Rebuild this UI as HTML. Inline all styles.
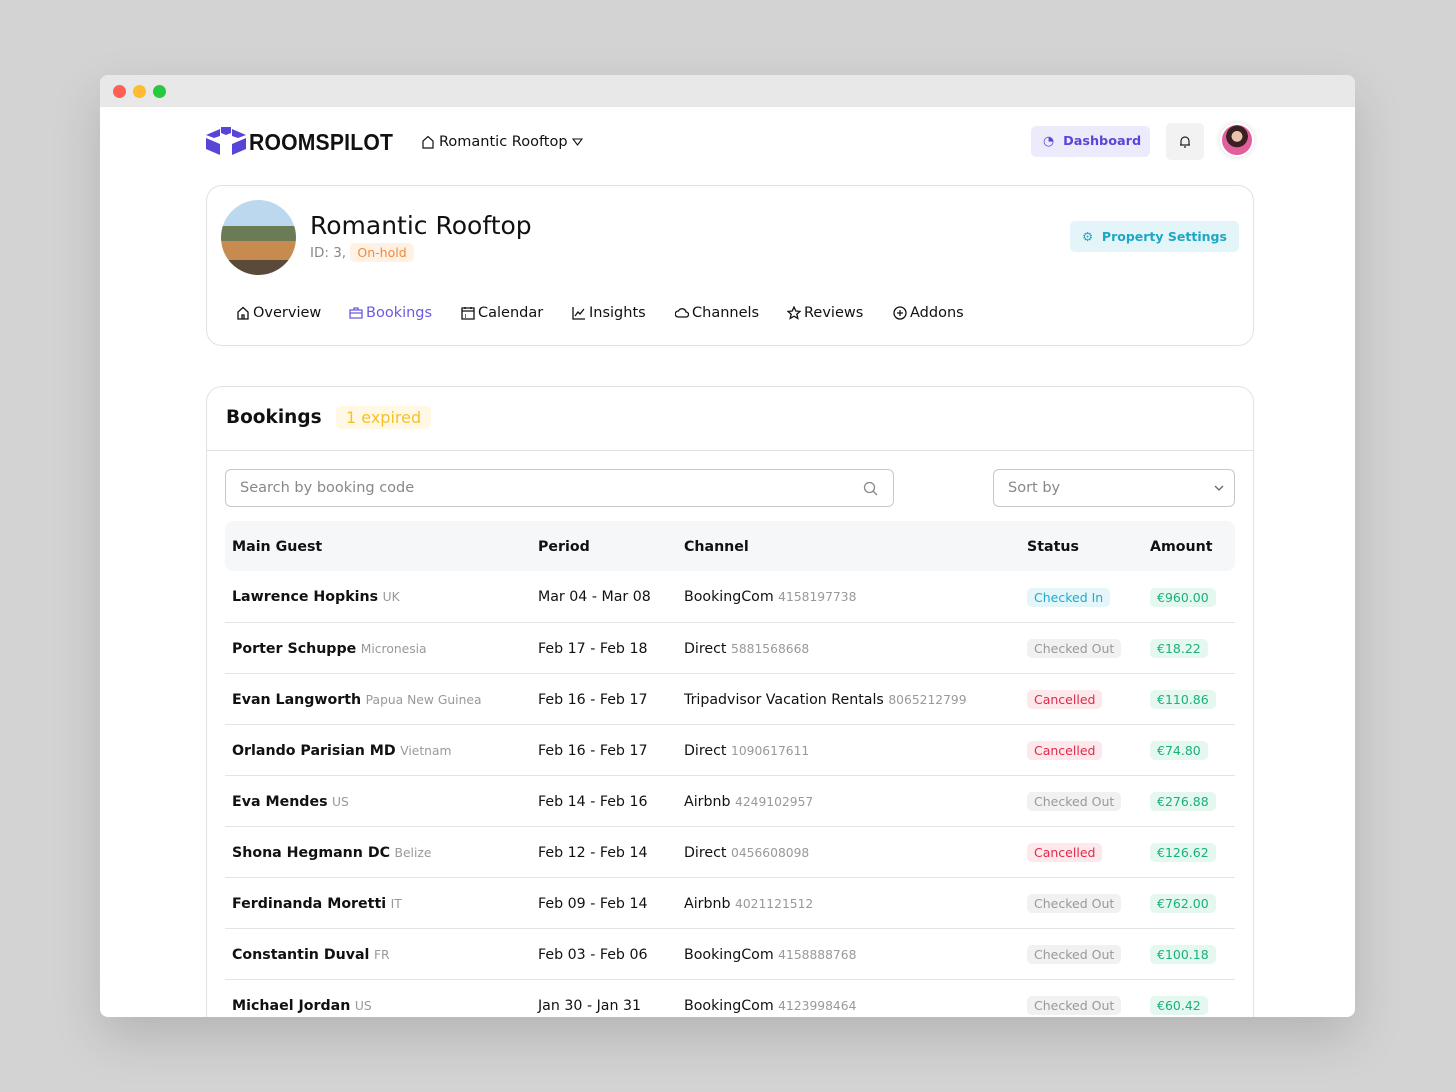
<!DOCTYPE html>
<html><head><meta charset="utf-8"><style>
*{box-sizing:border-box;margin:0;padding:0}
body{width:1455px;height:1092px;background:#d3d3d3;font-family:"DejaVu Sans","Liberation Sans",sans-serif;color:#111;position:relative;overflow:hidden}
.win{position:absolute;left:100px;top:75px;width:1255px;height:942px;background:#fff;border-radius:8px;overflow:hidden;box-shadow:0 20px 50px rgba(0,0,0,.15)}
.bar{height:32px;background:#e8e8e8;position:relative}
.dot{position:absolute;top:10px;width:13px;height:13px;border-radius:50%}
.abs{position:absolute}
.card{position:absolute;left:106px;width:1048px;border:1px solid #e2e2e2;border-radius:16px;background:#fff}
.tabs span{position:absolute;top:0;font-size:14.5px;display:flex;align-items:center;gap:3px}
.tabs svg{width:14px;height:14px;fill:none;stroke:currentColor;stroke-width:1.3}
.badge{display:inline-block;padding:2px 7px;border-radius:5px;font-size:12.5px}
table{border-collapse:collapse;width:1010px;position:absolute;left:125px;top:446px;font-size:14.2px}
th{height:50px;text-align:left;font-weight:bold;background:#f6f7f9;padding-left:7px;padding-top:2px}
td{height:51px;border-bottom:1px solid #e4e4e4;padding-left:7px;white-space:nowrap;padding-top:2px}
td b{font-weight:bold}
.g{color:#999;font-size:12.3px}
.ci{background:#e4f6fa;color:#22aac6}.co{background:#f1f1f1;color:#999}.ca{background:#fde8ec;color:#e02a4a}.am{background:#e5f8f0;color:#1ab07a}
</style></head><body>
<div class="win">
<div class="bar"><div class="dot" style="left:13px;background:#fe5f57"></div><div class="dot" style="left:33px;background:#febc2e"></div><div class="dot" style="left:53px;background:#28c840"></div></div>
<svg class="abs" style="left:106px;top:52px" width="40" height="29" viewBox="0 0 40 29"><path d="M0 8 L14 2 L14 9 L8 11 Z M26 2 L40 8 L32 11 L26 9 Z M0 11 L14 17 L14 28 L0 22 Z M26 17 L40 11 L40 22 L26 28 Z M15 0 L25 0 L25 6 L20 8 L15 6Z" fill="#5745d8"/></svg>
<div class="abs" style="left:149px;top:54px;font-family:'Liberation Sans',sans-serif;font-weight:bold;font-size:23px;letter-spacing:0.2px;transform:scaleX(.92);transform-origin:left">ROOMSPILOT</div>
<div class="abs" style="left:321px;top:59px;font-size:14.5px;display:flex;align-items:center;gap:4px"><svg width="14" height="14" viewBox="0 0 14 14" fill="none" stroke="#111" stroke-width="1.2"><path d="M2 13V6L7 1.5 12 6V13H2Z"/></svg>Romantic Rooftop<svg width="11" height="8" viewBox="0 0 11 8" fill="none" stroke="#111" stroke-width="1.1"><path d="M1 1H10L5.5 7Z"/></svg></div>
<div class="abs" style="left:931px;top:51px;width:119px;height:31px;background:#ecebfb;border-radius:5px;color:#5a45d8;font-weight:bold;font-size:12.8px;padding:8px 0 0 12px">◔ &nbsp;Dashboard</div>
<div class="abs" style="left:1066px;top:48px;width:38px;height:37px;background:#f2f2f2;border-radius:5px;display:flex;align-items:center;justify-content:center"><svg width="12" height="13" viewBox="0 0 12 13" fill="none" stroke="#222" stroke-width="1.2"><path d="M2 10V6a4 4 0 0 1 8 0v4H2ZM1 10h10M5 12h2"/></svg></div>
<div class="abs" style="left:1120px;top:48px;width:34px;height:34px;border-radius:50%;background:radial-gradient(circle at 50% 38%,#e8c4b0 0 22%,#3a2020 23% 45%,#e05f9c 46%);border:2px solid #fff;box-shadow:0 0 6px rgba(0,0,0,.15)"></div>
<div class="card" style="top:110px;height:161px">
<div class="abs" style="left:14px;top:14px;width:75px;height:75px;border-radius:50%;background:linear-gradient(#bcd8ef 0 35%,#6b7b55 35% 55%,#c88b4f 55% 80%,#5a4a3a 80%)"></div>
<div class="abs" style="left:103px;top:25px;font-size:25px">Romantic Rooftop</div>
<div class="abs" style="left:103px;top:57px;font-size:13.5px;color:#888">ID: 3, <span class="badge" style="background:#fff1e4;color:#f08a3c">On-hold</span></div>
<div class="abs" style="left:863px;top:35px;width:169px;height:31px;background:#e3f5f9;border-radius:5px;color:#1ea7c4;font-weight:bold;font-size:12.5px;padding:8px 0 0 12px">⚙ &nbsp;Property Settings</div>
<div class="tabs abs" style="left:0;top:119px;width:1000px;height:20px">
<span style="left:29px"><svg viewBox="0 0 14 14"><path d="M2 13V6L7 1.5 12 6V13H2ZM6 13V9h2v4"/></svg>Overview</span>
<span style="left:142px;color:#6a5be0"><svg viewBox="0 0 14 14"><path d="M1 4h12v8H1ZM5 4V2h4v2M1 7h12"/></svg>Bookings</span>
<span style="left:254px"><svg viewBox="0 0 14 14"><path d="M1 2h12v11H1ZM1 5h12M4 1v2M10 1v2M4 9h1M4 11h1"/></svg>Calendar</span>
<span style="left:365px"><svg viewBox="0 0 14 14"><path d="M1 1v12h12M3 10l3-4 2 2 4-5"/></svg>Insights</span>
<span style="left:468px"><svg viewBox="0 0 14 14"><path d="M3 11h8a2.5 2.5 0 0 0 0-5 4 4 0 0 0-7.5-1A3 3 0 0 0 3 11Z"/></svg>Channels</span>
<span style="left:580px"><svg viewBox="0 0 14 14"><path d="M7 1l1.8 4 4.2.4-3.2 2.8 1 4.2L7 10.2 3.2 12.4l1-4.2L1 5.4 5.2 5Z"/></svg>Reviews</span>
<span style="left:686px"><svg viewBox="0 0 14 14"><circle cx="7" cy="7" r="6"/><path d="M7 4v6M4 7h6"/></svg>Addons</span>
</div>
</div>
<div class="card" style="top:311px;height:700px">
<div style="height:64px;border-bottom:1px solid #e2e2e2;position:relative">
<div class="abs" style="left:19px;top:20px;font-size:18.5px;font-weight:bold">Bookings</div>
<div class="abs" style="left:129px;top:19px;background:#fff8e5;color:#f5c030;font-size:16px;padding:2px 10px;border-radius:5px">1 expired</div>
</div>
<div class="abs" style="left:18px;top:82px;width:669px;height:38px;border:1px solid #c8c8c8;border-radius:6px;color:#888;font-size:14.5px;padding:10px 14px">Search by booking code<svg style="position:absolute;right:15px;top:11px" width="15" height="15" viewBox="0 0 15 15" fill="none" stroke="#888" stroke-width="1.3"><circle cx="6.5" cy="6.5" r="5"/><path d="M10 10l4 4"/></svg></div>
<div class="abs" style="left:786px;top:82px;width:242px;height:38px;border:1px solid #c8c8c8;border-radius:6px;color:#888;font-size:14.5px;padding:10px 14px">Sort by<svg style="position:absolute;right:10px;top:15px" width="10" height="7" viewBox="0 0 10 7" fill="none" stroke="#666" stroke-width="1.3"><path d="M1 1l4 4 4-4"/></svg></div>
</div>
<table>
<tr><th style="width:306px;border-radius:8px 0 0 8px">Main Guest</th><th style="width:146px">Period</th><th style="width:343px">Channel</th><th style="width:123px">Status</th><th style="border-radius:0 8px 8px 0">Amount</th></tr>
<tr><td><b>Lawrence Hopkins</b> <span class="g">UK</span></td><td>Mar 04 - Mar 08</td><td>BookingCom <span class="g">4158197738</span></td><td><span class="badge ci">Checked In</span></td><td><span class="badge am">€960.00</span></td></tr>
<tr><td><b>Porter Schuppe</b> <span class="g">Micronesia</span></td><td>Feb 17 - Feb 18</td><td>Direct <span class="g">5881568668</span></td><td><span class="badge co">Checked Out</span></td><td><span class="badge am">€18.22</span></td></tr>
<tr><td><b>Evan Langworth</b> <span class="g">Papua New Guinea</span></td><td>Feb 16 - Feb 17</td><td>Tripadvisor Vacation Rentals <span class="g">8065212799</span></td><td><span class="badge ca">Cancelled</span></td><td><span class="badge am">€110.86</span></td></tr>
<tr><td><b>Orlando Parisian MD</b> <span class="g">Vietnam</span></td><td>Feb 16 - Feb 17</td><td>Direct <span class="g">1090617611</span></td><td><span class="badge ca">Cancelled</span></td><td><span class="badge am">€74.80</span></td></tr>
<tr><td><b>Eva Mendes</b> <span class="g">US</span></td><td>Feb 14 - Feb 16</td><td>Airbnb <span class="g">4249102957</span></td><td><span class="badge co">Checked Out</span></td><td><span class="badge am">€276.88</span></td></tr>
<tr><td><b>Shona Hegmann DC</b> <span class="g">Belize</span></td><td>Feb 12 - Feb 14</td><td>Direct <span class="g">0456608098</span></td><td><span class="badge ca">Cancelled</span></td><td><span class="badge am">€126.62</span></td></tr>
<tr><td><b>Ferdinanda Moretti</b> <span class="g">IT</span></td><td>Feb 09 - Feb 14</td><td>Airbnb <span class="g">4021121512</span></td><td><span class="badge co">Checked Out</span></td><td><span class="badge am">€762.00</span></td></tr>
<tr><td><b>Constantin Duval</b> <span class="g">FR</span></td><td>Feb 03 - Feb 06</td><td>BookingCom <span class="g">4158888768</span></td><td><span class="badge co">Checked Out</span></td><td><span class="badge am">€100.18</span></td></tr>
<tr><td><b>Michael Jordan</b> <span class="g">US</span></td><td>Jan 30 - Jan 31</td><td>BookingCom <span class="g">4123998464</span></td><td><span class="badge co">Checked Out</span></td><td><span class="badge am">€60.42</span></td></tr>
</table>
</div>
</body></html>
